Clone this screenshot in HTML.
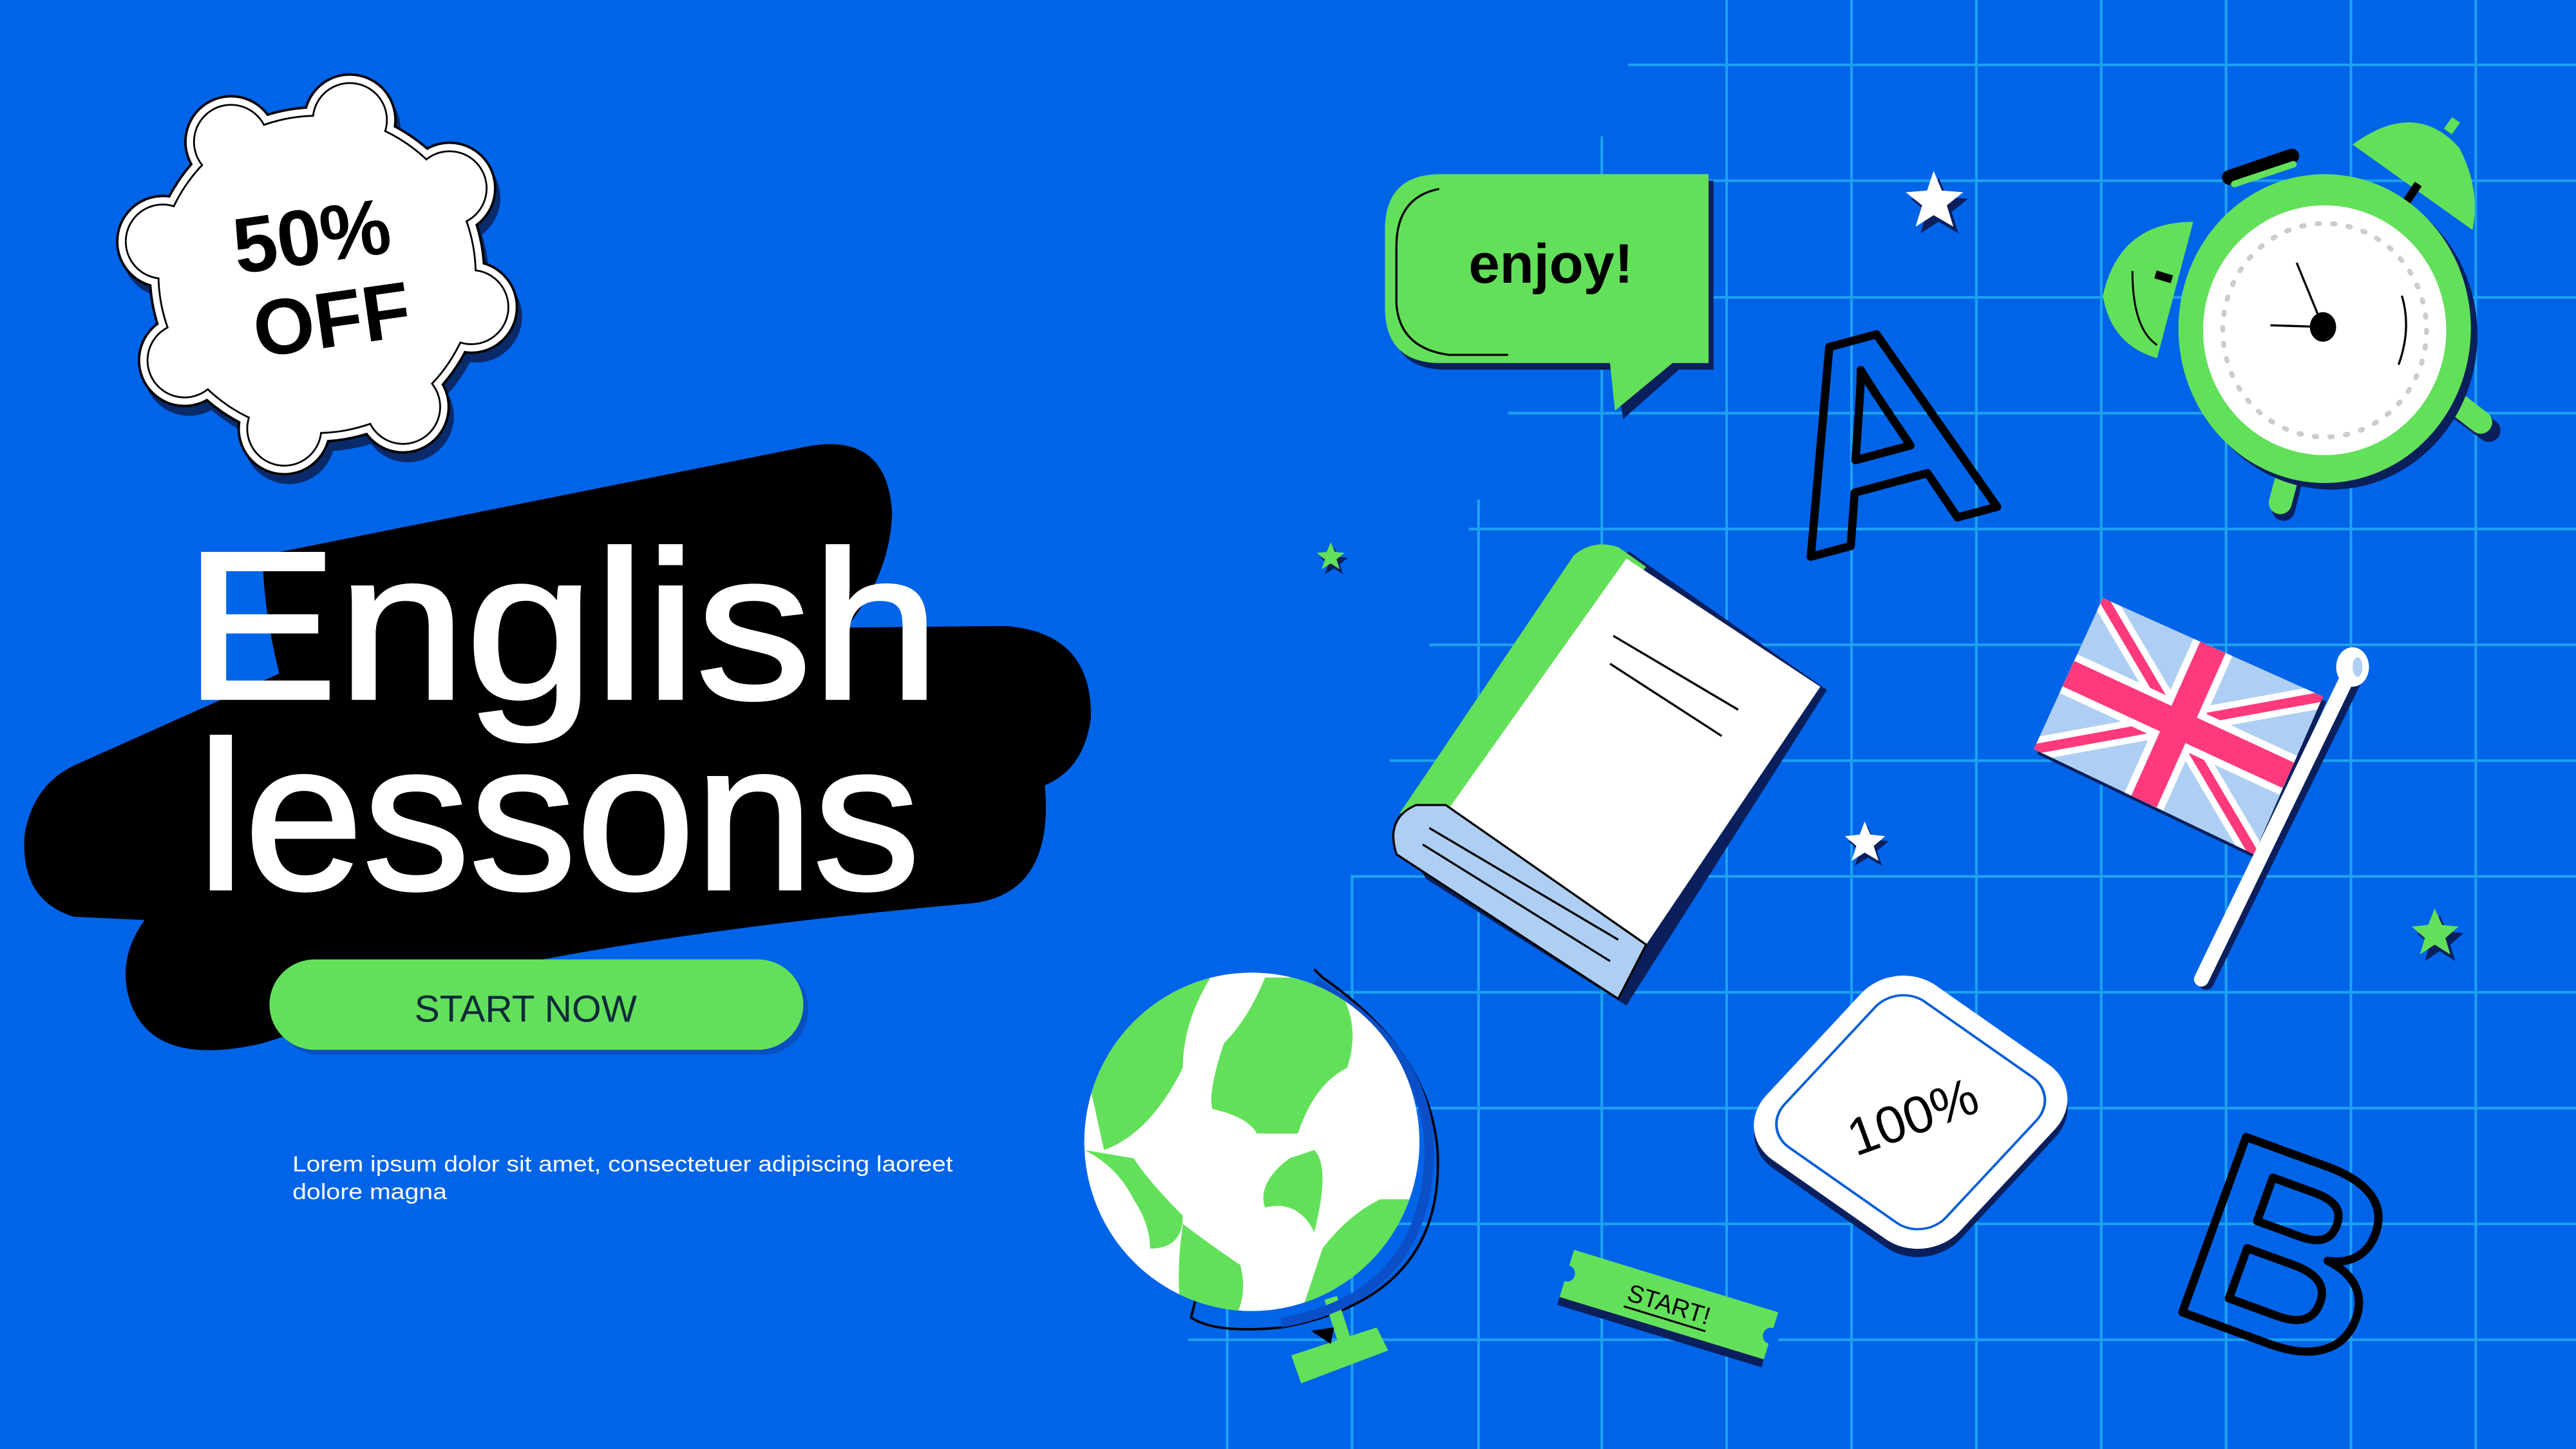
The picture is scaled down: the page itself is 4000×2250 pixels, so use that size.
<!DOCTYPE html>
<html><head><meta charset="utf-8"><style>
html,body{margin:0;padding:0;background:#0064E8;}
svg{display:block}
text{font-family:"Liberation Sans","DejaVu Sans",sans-serif}
</style></head><body>
<svg width="4000" height="2250" viewBox="0 0 1568 882" xmlns="http://www.w3.org/2000/svg">
<defs>
<g id="wb">
<circle cx="0" cy="0" r="96"/>
<circle cx="0" cy="-96" r="22"/><circle cx="68" cy="-68" r="22"/><circle cx="96" cy="0" r="22"/><circle cx="68" cy="68" r="22"/>
<circle cx="0" cy="96" r="22"/><circle cx="-68" cy="68" r="22"/><circle cx="-96" cy="0" r="22"/><circle cx="-68" cy="-68" r="22"/>
</g>
</defs>
<rect width="1568" height="882" fill="#0064E8"/>
<g stroke="#1DA2F2" stroke-width="1.6">
<line x1="991" y1="39.5" x2="1568" y2="39.5"/>
<line x1="960" y1="110" x2="1568" y2="110"/>
<line x1="940" y1="181" x2="1568" y2="181"/>
<line x1="918" y1="251.5" x2="1568" y2="251.5"/>
<line x1="894" y1="322" x2="1568" y2="322"/>
<line x1="870" y1="392.5" x2="1568" y2="392.5"/>
<line x1="846" y1="463" x2="1568" y2="463"/>
<line x1="822" y1="533.5" x2="1568" y2="533.5"/>
<line x1="740" y1="604" x2="1568" y2="604"/>
<line x1="730" y1="674.5" x2="1568" y2="674.5"/>
<line x1="725" y1="745" x2="1568" y2="745"/>
<line x1="723" y1="815.5" x2="1568" y2="815.5"/>
<line x1="747" y1="600" x2="747" y2="882"/>
<line x1="823" y1="533" x2="823" y2="882"/>
<line x1="900" y1="304" x2="900" y2="882"/>
<line x1="975" y1="83" x2="975" y2="882"/>
<line x1="1051" y1="0" x2="1051" y2="882"/>
<line x1="1127" y1="0" x2="1127" y2="882"/>
<line x1="1203" y1="0" x2="1203" y2="882"/>
<line x1="1279" y1="0" x2="1279" y2="882"/>
<line x1="1355" y1="0" x2="1355" y2="882"/>
<line x1="1431" y1="0" x2="1431" y2="882"/>
<line x1="1507" y1="0" x2="1507" y2="882"/>
</g>

<path d="M160,338 L490,272 Q540,262 543,312 Q542,350 515,382 L612,381 Q665,385 664,437 Q660,468 636,478 Q642,545 590,550 Q420,565 300,590 L160,635 Q95,650 80,612 Q70,585 88,560 L45,558 Q12,548 15,508 Q20,478 45,466 L170,410 Q160,370 160,338 Z" fill="#000"/>

<g transform="translate(193,167) rotate(12)">
 <g transform="translate(4,5)" fill="#0a2a6a" stroke="#0a2a6a" stroke-width="12"><use href="#wb"/></g>
 <g fill="none" stroke="#000" stroke-width="13"><use href="#wb"/></g>
 <g fill="#fff" stroke="#fff" stroke-width="10"><use href="#wb"/></g>
 <g fill="#fff" stroke="#000" stroke-width="2.2"><use href="#wb"/></g>
 <g fill="#fff"><use href="#wb"/></g>
</g>
<g transform="translate(193,167) rotate(-8)">
 <text x="0" y="-7" text-anchor="middle" font-size="48" font-weight="bold" fill="#000">50%</text>
 <text x="5" y="45" text-anchor="middle" font-size="48" font-weight="bold" fill="#000">OFF</text>
</g>

<text x="112" y="425" font-size="128" fill="#fff" stroke="#fff" stroke-width="2" textLength="460" lengthAdjust="spacingAndGlyphs">English</text>
<text x="120" y="541" font-size="128" fill="#fff" stroke="#fff" stroke-width="2" textLength="440" lengthAdjust="spacingAndGlyphs">lessons</text>

<rect x="167" y="587" width="325" height="55" rx="27.5" fill="#0a4fc0"/>
<rect x="164" y="584" width="325" height="55" rx="27.5" fill="#63E05A"/>
<text x="320" y="622" text-anchor="middle" font-size="23" fill="#0b2a3a">START NOW</text>

<text x="178" y="713" font-size="13.5" fill="#fff" textLength="402" lengthAdjust="spacingAndGlyphs">Lorem ipsum dolor sit amet, consectetuer adipiscing laoreet</text>
<text x="178" y="730" font-size="13.5" fill="#fff" textLength="94" lengthAdjust="spacingAndGlyphs">dolore magna</text>

<path d="M880,110 L1043,110 L1043,225 L1022,225 L988,255 L983,225 L880,225 Q846,225 846,190 L846,145 Q846,110 880,110 Z" fill="#0a1f5c"/>
<path d="M877,106 L1040,106 L1040,221 L1018,221 L983,250 L980,221 L877,221 Q843,221 843,187 L843,140 Q843,106 877,106 Z" fill="#63E05A"/>
<path d="M876,115 Q850,120 850,150 L850,185 Q852,212 882,216 L918,216" fill="none" stroke="#000" stroke-width="1.3"/>
<text x="944" y="172" text-anchor="middle" font-size="34" font-weight="bold" fill="#000">enjoy!</text>

<g fill="#0a1f5c"><path d="M1177,104 l5,12 13,1 -10,8 4,13 -12,-7 -11,7 4,-13 -10,-8 13,-1z" transform="translate(3,4)"/></g>
<path d="M1177,104 l5,12 13,1 -10,8 4,13 -12,-7 -11,7 4,-13 -10,-8 13,-1z" fill="#fff"/>
<path d="M1135,500 l3.5,8 9,1 -7,6 3,9 -8.5,-5 -8,5 3,-9 -7,-6 9,-1z" fill="#0a1f5c" transform="translate(2,3)"/>
<path d="M1135,500 l3.5,8 9,1 -7,6 3,9 -8.5,-5 -8,5 3,-9 -7,-6 9,-1z" fill="#fff"/>
<path d="M810,330 l2.5,6 6,.5 -5,4 2,6 -5.5,-3.5 -5.5,3.5 2,-6 -5,-4 6,-.5z" fill="#0a1f5c" transform="translate(2,3)"/>
<path d="M810,330 l2.5,6 6,.5 -5,4 2,6 -5.5,-3.5 -5.5,3.5 2,-6 -5,-4 6,-.5z" fill="#63E05A"/>
<path d="M1482,553 l4.5,10 10,1 -8,7 3,10 -9.5,-6 -9,6 3,-10 -8,-7 10,-1z" fill="#0a1f5c" transform="translate(3,4)"/>
<path d="M1482,553 l4.5,10 10,1 -8,7 3,10 -9.5,-6 -9,6 3,-10 -8,-7 10,-1z" fill="#63E05A"/>

<text x="0" y="0" font-size="175" font-weight="bold" fill="none" stroke="#000" stroke-width="5" stroke-linejoin="round" transform="translate(1098,340) rotate(-15)">A</text>

<g>
 <path d="M1432,88 Q1470,60 1497,90 Q1510,115 1505,140 Z" fill="#63E05A"/>
 <path d="M1490,80 l5,-7" stroke="#63E05A" stroke-width="6"/>
 <path d="M1335,135 Q1290,135 1280,180 Q1285,210 1313,218 Z" fill="#63E05A"/>
 <path d="M1298,165 Q1298,200 1313,210" fill="none" stroke="#000" stroke-width="1.2"/>
 <path d="M1357,108 L1395,95" stroke="#000" stroke-width="9" stroke-linecap="round"/>
 <path d="M1360,112 L1396,100" stroke="#63E05A" stroke-width="4" stroke-linecap="round"/>
 <path d="M1322,170 l-10,-3 M1472,112 l-8,12" stroke="#000" stroke-width="5"/>
 <path d="M1492,245 L1515,262" stroke="#0a1f5c" stroke-width="14" stroke-linecap="round"/>
 <path d="M1488,240 L1510,257" stroke="#63E05A" stroke-width="14" stroke-linecap="round"/>
 <path d="M1395,290 L1390,310" stroke="#0a1f5c" stroke-width="14" stroke-linecap="round"/>
 <path d="M1393,287 L1388,306" stroke="#63E05A" stroke-width="14" stroke-linecap="round"/>
 <ellipse cx="1419" cy="204" rx="89" ry="94" fill="#0a1f5c"/>
 <ellipse cx="1415" cy="200" rx="89" ry="94" fill="#63E05A"/>
 <ellipse cx="1415" cy="201" rx="74" ry="76" fill="#fff"/>
 <ellipse cx="1415" cy="201" rx="62" ry="65" fill="none" stroke="#ccc" stroke-width="3" stroke-dasharray="1.5 8" stroke-linecap="round"/>
 <path d="M1462,180 Q1468,200 1460,222" fill="none" stroke="#000" stroke-width="1.3"/>
 <line x1="1414" y1="199" x2="1398" y2="160" stroke="#000" stroke-width="1.3"/>
 <line x1="1414" y1="199" x2="1382" y2="198" stroke="#000" stroke-width="1.3"/>
 <ellipse cx="1414" cy="199" rx="8" ry="9" fill="#000"/>
</g>

<g>
 <path d="M962,342 L992,336 L1112,420 L990,612 L868,535 L854,510 Z" fill="#0a1f5c"/>
 <path d="M958,338 Q970,328 985,333 L1002,345 L880,495 L852,495 Z" fill="#63E05A"/>
 <path d="M990,340 L1108,418 L1000,578 L882,492 Z" fill="#fff"/>
 <path d="M862,490 Q843,498 850,520 L985,608 L1002,575 L880,490 Z" fill="#AECFF3" stroke="#000" stroke-width="1.3"/>
 <line x1="982" y1="387" x2="1058" y2="432" stroke="#000" stroke-width="1.3"/>
 <line x1="980" y1="404" x2="1048" y2="448" stroke="#000" stroke-width="1.3"/>
 <line x1="870" y1="504" x2="985" y2="572" stroke="#000" stroke-width="1.3"/>
 <line x1="866" y1="514" x2="980" y2="585" stroke="#000" stroke-width="1.3"/>
</g>

<g>
 <path d="M1280,364 L1414,424 L1372,520 L1238,456 Z" fill="#0a1f5c" transform="translate(2,3)"/>
 <path d="M1280,364 L1414,424 L1372,520 L1238,456 Z" fill="#AECFF3"/>
 <clipPath id="fc"><path d="M1280,364 L1414,424 L1372,520 L1238,456 Z"/></clipPath>
 <g clip-path="url(#fc)">
  <line x1="1280" y1="364" x2="1372" y2="520" stroke="#fff" stroke-width="14"/>
  <line x1="1414" y1="424" x2="1238" y2="456" stroke="#fff" stroke-width="14"/>
  <line x1="1280" y1="364" x2="1372" y2="520" stroke="#FF3A7A" stroke-width="6"/>
  <line x1="1414" y1="424" x2="1238" y2="456" stroke="#FF3A7A" stroke-width="6"/>
  <line x1="1347" y1="394" x2="1305" y2="488" stroke="#fff" stroke-width="26"/>
  <line x1="1259" y1="410" x2="1393" y2="472" stroke="#fff" stroke-width="26"/>
  <line x1="1347" y1="394" x2="1305" y2="488" stroke="#FF3A7A" stroke-width="17"/>
  <line x1="1259" y1="410" x2="1393" y2="472" stroke="#FF3A7A" stroke-width="17"/>
 </g>
 <line x1="1434" y1="412" x2="1343" y2="598" stroke="#0a1f5c" stroke-width="9" stroke-linecap="round"/>
 <line x1="1431" y1="408" x2="1340" y2="596" stroke="#fff" stroke-width="9" stroke-linecap="round"/>
 <ellipse cx="1432" cy="406" rx="10" ry="12" fill="#fff"/>
 <ellipse cx="1435" cy="406" rx="3" ry="6" fill="#AECFF3"/>
</g>

<g>
 <path d="M800,590 L805,595 Q870,640 875,700 Q880,790 780,808 Q740,812 725,802 L728,790" fill="none" stroke="#000" stroke-width="1.5"/>
 <path d="M810,790 L818,815" stroke="#63E05A" stroke-width="8"/>
 <path d="M786,825 L838,808 L845,822 L792,842 Z" fill="#63E05A"/>
 <path d="M798,810 L812,808 L810,818 Z" fill="#000"/>
 <path d="M800,598 Q872,640 870,705 Q866,790 780,805" fill="none" stroke="#0a4fc8" stroke-width="6"/>
 <clipPath id="gc"><ellipse cx="762" cy="695" rx="102" ry="103"/></clipPath>
 <ellipse cx="762" cy="695" rx="102" ry="103" fill="#fff"/>
 <g clip-path="url(#gc)" fill="#63E05A">
  <path d="M740,590 Q720,620 720,650 Q700,690 672,700 L650,600 Z"/>
  <path d="M770,595 Q760,620 745,635 Q735,665 738,675 Q760,680 765,690 Q775,690 790,690 Q800,660 820,650 Q830,620 810,595 Z"/>
  <path d="M785,705 Q765,720 770,735 Q790,730 800,750 Q810,710 800,700 Z"/>
  <path d="M660,700 Q680,710 690,730 Q700,745 700,760 Q720,760 720,740 Q700,720 690,705 Z"/>
  <path d="M720,745 Q740,760 755,770 Q760,790 750,805 L720,805 Q715,780 720,745 Z"/>
  <path d="M840,730 Q820,740 805,760 Q795,790 790,805 L880,805 L880,730 Z"/>
  <path d="M655,740 Q680,750 690,780 L660,800 Z"/>
 </g>
</g>

<g transform="translate(1163,677) rotate(35)">
 <rect x="-72" y="-72" width="144" height="144" rx="30" fill="#0a1f5c" transform="translate(3,4) skewX(-8)"/>
 <rect x="-72" y="-72" width="144" height="144" rx="30" fill="#fff" transform="skewX(-8)"/>
 <rect x="-60" y="-60" width="120" height="120" rx="20" fill="none" stroke="#0a5fd8" stroke-width="1.5" transform="skewX(-8)"/>
</g>
<text x="0" y="0" text-anchor="middle" font-size="32" fill="#000" transform="translate(1168,690) rotate(-20)">100%</text>

<text x="0" y="0" font-size="165" font-weight="bold" fill="none" stroke="#000" stroke-width="5" stroke-linejoin="round" transform="translate(1318,795) rotate(20)">B</text>

<g transform="translate(1015,797) rotate(17)">
 <rect x="-65" y="-13" width="130" height="30" fill="#0a1f5c"/>
 <rect x="-65" y="-18" width="130" height="30" fill="#63E05A"/>
 <circle cx="-65" cy="-3" r="5" fill="#0064E8"/>
 <circle cx="65" cy="-3" r="5" fill="#0064E8"/>
 <text x="0" y="2" text-anchor="middle" font-size="15" fill="#000">START!</text>
 <line x1="-26" y1="6" x2="26" y2="6" stroke="#000" stroke-width="1.2"/>
</g>
</svg>
</body></html>
